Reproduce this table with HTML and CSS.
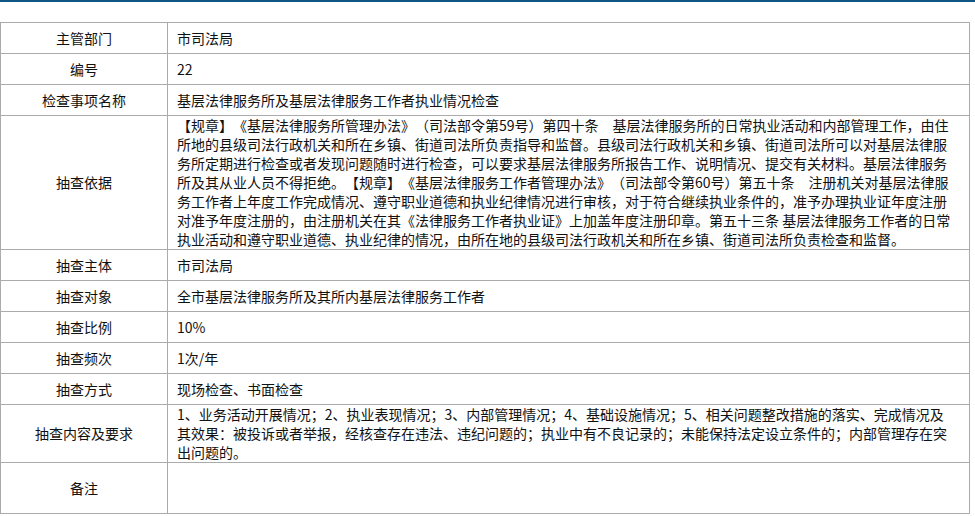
FILE: index.html
```html
<!DOCTYPE html>
<html lang="zh-CN">
<head>
<meta charset="utf-8">
<title>抽查事项</title>
<link rel="stylesheet" href="styles.css">
</head>
<body>
<div class="topbar"></div>
<table class="info">
<colgroup><col class="col-label"><col class="col-value"></colgroup>
<tbody>
<tr><th>主管部门</th><td>市司法局</td></tr>
<tr><th>编号</th><td>22</td></tr>
<tr><th>检查事项名称</th><td>基层法律服务所及基层法律服务工作者执业情况检查</td></tr>
<tr><th>抽查依据</th><td>【规章】《基层法律服务所管理办法》（司法部令第59号）第四十条　基层法律服务所的日常执业活动和内部管理工作，由住所地的县级司法行政机关和所在乡镇、街道司法所负责指导和监督。县级司法行政机关和乡镇、街道司法所可以对基层法律服务所定期进行检查或者发现问题随时进行检查，可以要求基层法律服务所报告工作、说明情况、提交有关材料。基层法律服务所及其从业人员不得拒绝。【规章】《基层法律服务工作者管理办法》（司法部令第60号）第五十条　注册机关对基层法律服务工作者上年度工作完成情况、遵守职业道德和执业纪律情况进行审核，对于符合继续执业条件的，准予办理执业证年度注册对准予年度注册的，由注册机关在其《法律服务工作者执业证》上加盖年度注册印章。第五十三条 基层法律服务工作者的日常执业活动和遵守职业道德、执业纪律的情况，由所在地的县级司法行政机关和所在乡镇、街道司法所负责检查和监督。</td></tr>
<tr><th>抽查主体</th><td>市司法局</td></tr>
<tr><th>抽查对象</th><td>全市基层法律服务所及其所内基层法律服务工作者</td></tr>
<tr><th>抽查比例</th><td>10%</td></tr>
<tr><th>抽查频次</th><td>1次/年</td></tr>
<tr><th>抽查方式</th><td>现场检查、书面检查</td></tr>
<tr><th>抽查内容及要求</th><td>1、业务活动开展情况；2、执业表现情况；3、内部管理情况；4、基础设施情况；5、相关问题整改措施的落实、完成情况及其效果：被投诉或者举报，经核查存在违法、违纪问题的；执业中有不良记录的；未能保持法定设立条件的；内部管理存在突出问题的。</td></tr>
<tr class="row-note"><th>备注</th><td></td></tr>
</tbody>
</table>
</body>
</html>
```
FILE: styles.css
```css
html, body {
  margin: 0;
  padding: 0;
  background: #fff;
}
body {
  font-family: "Noto Sans CJK SC", "Noto Sans", sans-serif;
  font-size: 14px;
  color: #111;
  text-spacing-trim: space-all;
}
.topbar {
  height: 2px;
  background: #0f5585;
}
.info {
  margin-top: 20px;
  width: 970px;
  border-collapse: collapse;
  table-layout: fixed;
}
.col-label { width: 167px; }
.info th,
.info td {
  border: 1px solid #ababab;
  height: 30px;
  line-height: 19px;
  padding: 0;
  vertical-align: middle;
}
.info th {
  font-weight: normal;
  text-align: center;
}
.info td {
  text-align: left;
  padding: 0 13px 0 9px;
}
.row-note th,
.row-note td {
  height: 50px;
}
```
